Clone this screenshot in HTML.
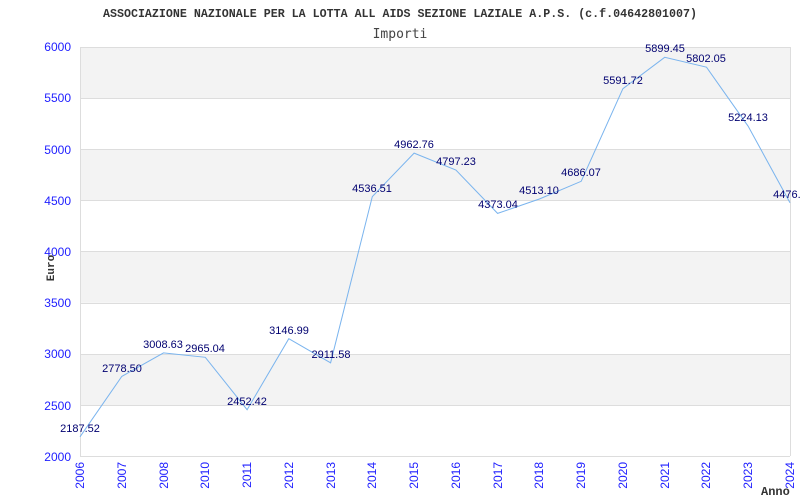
<!DOCTYPE html>
<html><head><meta charset="utf-8"><style>body{margin:0;background:#fff}svg{display:block}</style></head><body>
<svg width="800" height="500" xmlns="http://www.w3.org/2000/svg">
<rect width="800" height="500" fill="#fff"/>
<text x="103" y="17" textLength="594" lengthAdjust="spacingAndGlyphs" font-family="Liberation Mono, monospace" font-weight="bold" font-size="11.5" fill="#333">ASSOCIAZIONE NAZIONALE PER LA LOTTA ALL AIDS SEZIONE LAZIALE A.P.S. (c.f.04642801007)</text>
<text x="400" y="38" text-anchor="middle" font-family="DejaVu Sans Mono, monospace" font-size="13" fill="#444">Importi</text>
<g fill="#f3f3f3">
<rect x="80" y="47" width="710" height="51"/>
<rect x="80" y="149.5" width="710" height="51"/>
<rect x="80" y="251.8" width="710" height="51"/>
<rect x="80" y="354" width="710" height="51"/>
</g>
<g stroke="#ddd" stroke-width="1">
<line x1="80" y1="47.5" x2="790" y2="47.5"/><line x1="80" y1="98.5" x2="790" y2="98.5"/>
<line x1="80" y1="149.5" x2="790" y2="149.5"/><line x1="80" y1="200.5" x2="790" y2="200.5"/>
<line x1="80" y1="251.5" x2="790" y2="251.5"/><line x1="80" y1="303.5" x2="790" y2="303.5"/>
<line x1="80" y1="354.5" x2="790" y2="354.5"/><line x1="80" y1="405.5" x2="790" y2="405.5"/>
<line x1="80" y1="456.5" x2="790" y2="456.5"/>
<line x1="80.5" y1="47" x2="80.5" y2="456"/><line x1="790.5" y1="47" x2="790.5" y2="456"/>
</g>
<g font-family="Liberation Sans, sans-serif" font-size="12" fill="#2020ff" text-anchor="end">
<text x="71" y="51">6000</text><text x="71" y="102">5500</text><text x="71" y="154">5000</text>
<text x="71" y="205">4500</text><text x="71" y="256">4000</text><text x="71" y="307">3500</text>
<text x="71" y="358">3000</text><text x="71" y="410">2500</text><text x="71" y="461">2000</text>
</g>
<g font-family="Liberation Sans, sans-serif" font-size="12" fill="#2020ff" text-anchor="end">
<text transform="translate(84,462) rotate(-90)">2006</text>
<text transform="translate(126,462) rotate(-90)">2007</text>
<text transform="translate(168,462) rotate(-90)">2008</text>
<text transform="translate(209,462) rotate(-90)">2010</text>
<text transform="translate(251,462) rotate(-90)">2011</text>
<text transform="translate(293,462) rotate(-90)">2012</text>
<text transform="translate(335,462) rotate(-90)">2013</text>
<text transform="translate(376,462) rotate(-90)">2014</text>
<text transform="translate(418,462) rotate(-90)">2015</text>
<text transform="translate(460,462) rotate(-90)">2016</text>
<text transform="translate(502,462) rotate(-90)">2017</text>
<text transform="translate(543,462) rotate(-90)">2018</text>
<text transform="translate(585,462) rotate(-90)">2019</text>
<text transform="translate(627,462) rotate(-90)">2020</text>
<text transform="translate(669,462) rotate(-90)">2021</text>
<text transform="translate(710,462) rotate(-90)">2022</text>
<text transform="translate(752,462) rotate(-90)">2023</text>
<text transform="translate(794,462) rotate(-90)">2024</text>
</g>
<text x="761" y="495" font-family="Liberation Mono, monospace" font-weight="bold" font-size="12" fill="#333">Anno</text>
<text transform="translate(54,268) rotate(-90)" font-family="Liberation Mono, monospace" font-weight="bold" font-size="11" fill="#333" text-anchor="middle">Euro</text>
<polyline fill="none" stroke="#7ab4ee" stroke-width="1" points="80,436.8 121.8,376.4 163.5,352.9 205.3,357.3 247.1,409.7 288.8,338.7 330.6,362.8 372.3,196.6 414.1,153.1 455.9,170 497.6,213.4 539.4,199 581.2,181.3 622.9,88.7 664.7,57.3 706.5,67.2 748.2,126.3 790,202.7"/>
<g font-family="Liberation Sans, sans-serif" font-size="11" fill="#000070" text-anchor="middle">
<text x="80" y="432">2187.52</text>
<text x="122" y="372">2778.50</text>
<text x="163" y="348">3008.63</text>
<text x="205" y="352">2965.04</text>
<text x="247" y="405">2452.42</text>
<text x="289" y="334">3146.99</text>
<text x="331" y="358">2911.58</text>
<text x="372" y="192">4536.51</text>
<text x="414" y="148">4962.76</text>
<text x="456" y="165">4797.23</text>
<text x="498" y="208">4373.04</text>
<text x="539" y="194">4513.10</text>
<text x="581" y="176">4686.07</text>
<text x="623" y="84">5591.72</text>
<text x="665" y="52">5899.45</text>
<text x="706" y="62">5802.05</text>
<text x="748" y="121">5224.13</text>
<text x="790" y="198">4476.9</text>
</g>
</svg>
</body></html>
